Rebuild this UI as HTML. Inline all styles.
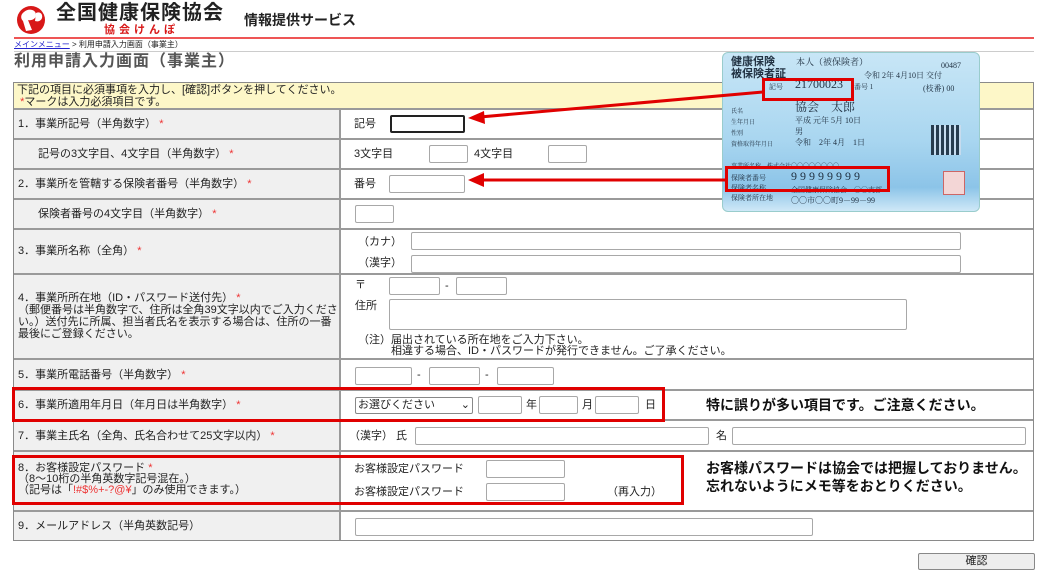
<!DOCTYPE html>
<html><head><meta charset="utf-8"><style>
*{margin:0;padding:0;box-sizing:border-box}
body{width:1045px;height:575px;background:#fff;font-family:"Liberation Sans","Noto Sans CJK JP",sans-serif;font-size:11px;color:#222;position:relative;overflow:hidden}
.a{position:absolute;white-space:nowrap;line-height:13px}
.r{position:absolute;left:13px;width:1021px;border:1px solid #8a8a8a;border-top:none}
.l{position:absolute;left:0;top:0;bottom:0;width:327px;background:#f0f0f0;border-right:2px solid #9a9a9a;border-top:2px solid #9a9a9a}
.rc{position:absolute;left:327px;right:0;top:0;bottom:0;border-top:2px solid #9a9a9a}
.in{position:absolute;border:1px solid #a8a8a8;border-radius:2px;background:#fff}
.s{color:#e33}
.red{position:absolute;border:3px solid #e00000}
.big{position:absolute;font-weight:bold;font-size:14px;color:#111;white-space:nowrap}
</style></head><body>
<!-- header -->
<svg class="a" style="left:14px;top:4px" width="36" height="32" viewBox="0 0 36 32"><circle cx="17" cy="16" r="14" fill="#d81818"/><path d="M10 8 C14 4 22 5 22 11 C22 15 17 17 14 16 L18 26 L12 27 L9 17 C6 14 7 10 10 8 Z" fill="#fff"/><path d="M22 9 C26 7 29 10 28 14 C27 17 24 18 21 17 Z" fill="#fff"/></svg>
<div class="a" style="left:56px;top:2px;font-size:20px;line-height:22px;font-weight:bold;color:#222;letter-spacing:1px">全国健康保険協会</div>
<div class="a" style="left:104px;top:24px;font-size:11px;line-height:12px;color:#d81818;font-weight:bold;letter-spacing:4px">協会けんぽ</div>
<div class="a" style="left:244px;top:12px;font-size:14px;line-height:16px;font-weight:bold;color:#222">情報提供サービス</div>
<div class="a" style="left:14px;top:37px;width:1020px;height:2px;background:#e55"></div>
<div class="a" style="left:14px;top:40px;font-size:8px;line-height:10px;color:#222"><span style="color:#22c;text-decoration:underline">メインメニュー</span> &gt; 利用申請入力画面（事業主）</div>
<div class="a" style="left:14px;top:51px;width:1020px;height:1px;background:#ccc"></div>
<div class="a" style="left:14px;top:53px;font-size:16px;line-height:18px;font-weight:bold;color:#555;letter-spacing:1px">利用申請入力画面（事業主）</div>
<div class="a" style="left:13px;top:82px;width:1021px;height:28px;background:#fdf7c8;border:1px solid #8a8a8a;font-size:11px;line-height:12px;padding:1px 3px">下記の項目に必須事項を入力し、[確認]ボタンを押してください。<br>&nbsp;<span class="s">*</span>マークは入力必須項目です。</div>

<!-- rows -->
<div class="r" style="top:108px;height:31px"><div class="l"><div class="a" style="left:4px;top:8px">1．事業所記号（半角数字） <span class="s">*</span></div></div><div class="rc"><div class="a" style="left:13px;top:8px">記号</div><div class="in" style="left:49px;top:5px;width:75px;height:18px;border:2px solid #222"></div></div></div>
<div class="r" style="top:138px;height:31px"><div class="l"><div class="a" style="left:24px;top:8px">記号の3文字目、4文字目（半角数字） <span class="s">*</span></div></div><div class="rc"><div class="a" style="left:13px;top:8px">3文字目</div><div class="in" style="left:88px;top:5px;width:39px;height:18px"></div><div class="a" style="left:133px;top:8px">4文字目</div><div class="in" style="left:207px;top:5px;width:39px;height:18px"></div></div></div>
<div class="r" style="top:168px;height:31px"><div class="l"><div class="a" style="left:4px;top:8px">2．事業所を管轄する保険者番号（半角数字） <span class="s">*</span></div></div><div class="rc"><div class="a" style="left:13px;top:8px">番号</div><div class="in" style="left:48px;top:5px;width:76px;height:18px"></div></div></div>
<div class="r" style="top:198px;height:31px"><div class="l"><div class="a" style="left:24px;top:8px">保険者番号の4文字目（半角数字） <span class="s">*</span></div></div><div class="rc"><div class="in" style="left:14px;top:5px;width:39px;height:18px"></div></div></div>
<div class="r" style="top:228px;height:46px"><div class="l"><div class="a" style="left:4px;top:15px">3．事業所名称（全角） <span class="s">*</span></div></div><div class="rc"><div class="a" style="left:17px;top:6px">（カナ）</div><div class="in" style="left:70px;top:2px;width:550px;height:18px"></div><div class="a" style="left:17px;top:27px">（漢字）</div><div class="in" style="left:70px;top:25px;width:550px;height:18px"></div></div></div>
<div class="r" style="top:273px;height:86px"><div class="l"><div class="a" style="left:4px;top:17px;line-height:12px;white-space:normal;width:322px">4．事業所所在地（ID・パスワード送付先） <span class="s">*</span><br>（郵便番号は半角数字で、住所は全角39文字以内でご入力ください。）送付先に所属、担当者氏名を表示する場合は、住所の一番最後にご登録ください。</div></div><div class="rc"><div class="a" style="left:14px;top:4px">〒</div><div class="in" style="left:48px;top:2px;width:51px;height:18px"></div><div class="a" style="left:104px;top:5px">-</div><div class="in" style="left:115px;top:2px;width:51px;height:18px"></div><div class="a" style="left:14px;top:25px">住所</div><div class="in" style="left:48px;top:24px;width:518px;height:31px"></div><div class="a" style="left:17px;top:60px;line-height:11px">（注）届出されている所在地をご入力下さい。<br>　　　相違する場合、ID・パスワードが発行できません。ご了承ください。</div></div></div>
<div class="r" style="top:358px;height:32px"><div class="l"><div class="a" style="left:4px;top:9px">5．事業所電話番号（半角数字） <span class="s">*</span></div></div><div class="rc"><div class="in" style="left:14px;top:7px;width:57px;height:18px"></div><div class="a" style="left:76px;top:9px">-</div><div class="in" style="left:88px;top:7px;width:51px;height:18px"></div><div class="a" style="left:144px;top:9px">-</div><div class="in" style="left:156px;top:7px;width:57px;height:18px"></div></div></div>
<div class="r" style="top:389px;height:31px"><div class="l"><div class="a" style="left:4px;top:8px">6．事業所適用年月日（年月日は半角数字） <span class="s">*</span></div></div><div class="rc"><div class="in" style="left:14px;top:6px;width:118px;height:17px;padding:1px 2px;font-size:11px;line-height:13px;border-color:#888">お選びください <span style="float:right">⌄</span></div><div class="in" style="left:137px;top:5px;width:44px;height:18px"></div><div class="a" style="left:185px;top:8px">年</div><div class="in" style="left:198px;top:5px;width:39px;height:18px"></div><div class="a" style="left:241px;top:8px">月</div><div class="in" style="left:254px;top:5px;width:44px;height:18px"></div><div class="a" style="left:304px;top:8px">日</div></div></div>
<div class="r" style="top:419px;height:32px"><div class="l"><div class="a" style="left:4px;top:9px">7．事業主氏名（全角、氏名合わせて25文字以内） <span class="s">*</span></div></div><div class="rc"><div class="a" style="left:8px;top:9px">（漢字） 氏</div><div class="in" style="left:74px;top:6px;width:294px;height:18px"></div><div class="a" style="left:375px;top:9px">名</div><div class="in" style="left:391px;top:6px;width:294px;height:18px"></div></div></div>
<div class="r" style="top:450px;height:61px"><div class="l"><div class="a" style="left:4px;top:11px;line-height:11px">8．お客様設定パスワード <span class="s">*</span><br>（8～10桁の半角英数字記号混在。）<br>（記号は「<span class="s">!#$%+-?@¥</span>」のみ使用できます。）</div></div><div class="rc"><div class="a" style="left:13px;top:11px">お客様設定パスワード</div><div class="in" style="left:145px;top:8px;width:79px;height:18px"></div><div class="a" style="left:13px;top:34px">お客様設定パスワード</div><div class="in" style="left:145px;top:31px;width:79px;height:18px"></div><div class="a" style="left:266px;top:34px">（再入力）</div></div></div>
<div class="r" style="top:510px;height:31px;border-bottom:1px solid #8a8a8a"><div class="l"><div class="a" style="left:4px;top:8px">9．メールアドレス（半角英数記号）</div></div><div class="rc"><div class="in" style="left:14px;top:6px;width:458px;height:18px"></div></div></div>

<div class="in" style="left:918px;top:553px;width:117px;height:17px;background:#eee;border-color:#888;text-align:center;line-height:15px">確認</div>

<!-- highlights -->
<div class="red" style="left:12px;top:387px;width:653px;height:35px"></div>
<div class="red" style="left:12px;top:455px;width:672px;height:50px"></div>
<div class="big" style="left:706px;top:395px">特に誤りが多い項目です。ご注意ください。</div>
<div class="big" style="left:706px;top:459px;line-height:18px">お客様パスワードは協会では把握しておりません。<br>忘れないようにメモ等をおとりください。</div>

<!-- card -->
<div class="a" style="left:722px;top:52px;width:258px;height:160px;border-radius:6px;background:linear-gradient(180deg,#c8e6f6 0%,#a9d6f0 55%,#8cc4e8 85%,#cfe8f7 100%);border:1px solid #9cc;overflow:hidden;font-family:'Liberation Serif','Noto Serif CJK SC',serif;color:#234">
 <div class="a" style="left:8px;top:3px;font-size:11px;font-weight:bold;line-height:12px;font-family:'Liberation Sans','Noto Sans CJK JP',sans-serif">健康保険<br>被保険者証</div>
 <div class="a" style="left:73px;top:3px;font-size:9px">本人（被保険者）</div>
 <div class="a" style="left:218px;top:6px;font-size:8px">00487</div>
 <div class="a" style="left:141px;top:16px;font-size:8px">令和 2年 4月10日 交付</div>
 <div class="a" style="left:46px;top:28px;font-size:7px">記号</div>
 <div class="a" style="left:72px;top:25px;font-size:12px">21700023</div>
 <div class="a" style="left:131px;top:28px;font-size:7px">番号 1</div>
 <div class="a" style="left:200px;top:29px;font-size:8px">(枝番) 00</div>
 <div class="a" style="left:8px;top:54px;font-size:6px;line-height:11px">氏名<br>生年月日<br>性別<br>資格取得年月日</div>
 <div class="a" style="left:72px;top:48px;font-size:12px">協会　太郎</div>
 <div class="a" style="left:72px;top:62px;font-size:8px;line-height:11px">平成 元年 5月 10日<br>男<br>令和　2年 4月　1日</div>
 <div class="a" style="left:208px;top:72px;width:30px;height:30px;background:repeating-linear-gradient(90deg,#123 0 3px,#cde 3px 5px),#123;opacity:.85"></div>
 <div class="a" style="left:8px;top:108px;font-size:6px">事業所名称　株式会社〇〇〇〇〇〇〇〇</div>
 <div class="a" style="left:8px;top:120px;font-size:7px;line-height:10px">保険者番号<br>保険者名称<br>保険者所在地</div>
 <div class="a" style="left:68px;top:117px;font-size:12px;letter-spacing:3px">99999999</div>
 <div class="a" style="left:68px;top:131px;font-size:7px">全国健康保険協会　〇〇支部</div>
 <div class="a" style="left:68px;top:141px;font-size:8px">〇〇市〇〇町9－99－99</div>
 <div class="a" style="left:220px;top:118px;width:22px;height:24px;border:1px solid #c66;background:#f3d6d6"></div>
</div>
<div class="red" style="left:762px;top:78px;width:92px;height:23px"></div>
<div class="red" style="left:725px;top:166px;width:165px;height:26px"></div>
<svg class="a" style="left:460px;top:85px" width="310" height="105"><g stroke="#e00000" stroke-width="3" fill="#e00000"><line x1="303" y1="7" x2="20" y2="32"/><polygon points="8,33 24,26 25,39" stroke="none"/><line x1="265" y1="95" x2="20" y2="95"/><polygon points="8,95 24,88 24,102" stroke="none"/></g></svg>
</body></html>
